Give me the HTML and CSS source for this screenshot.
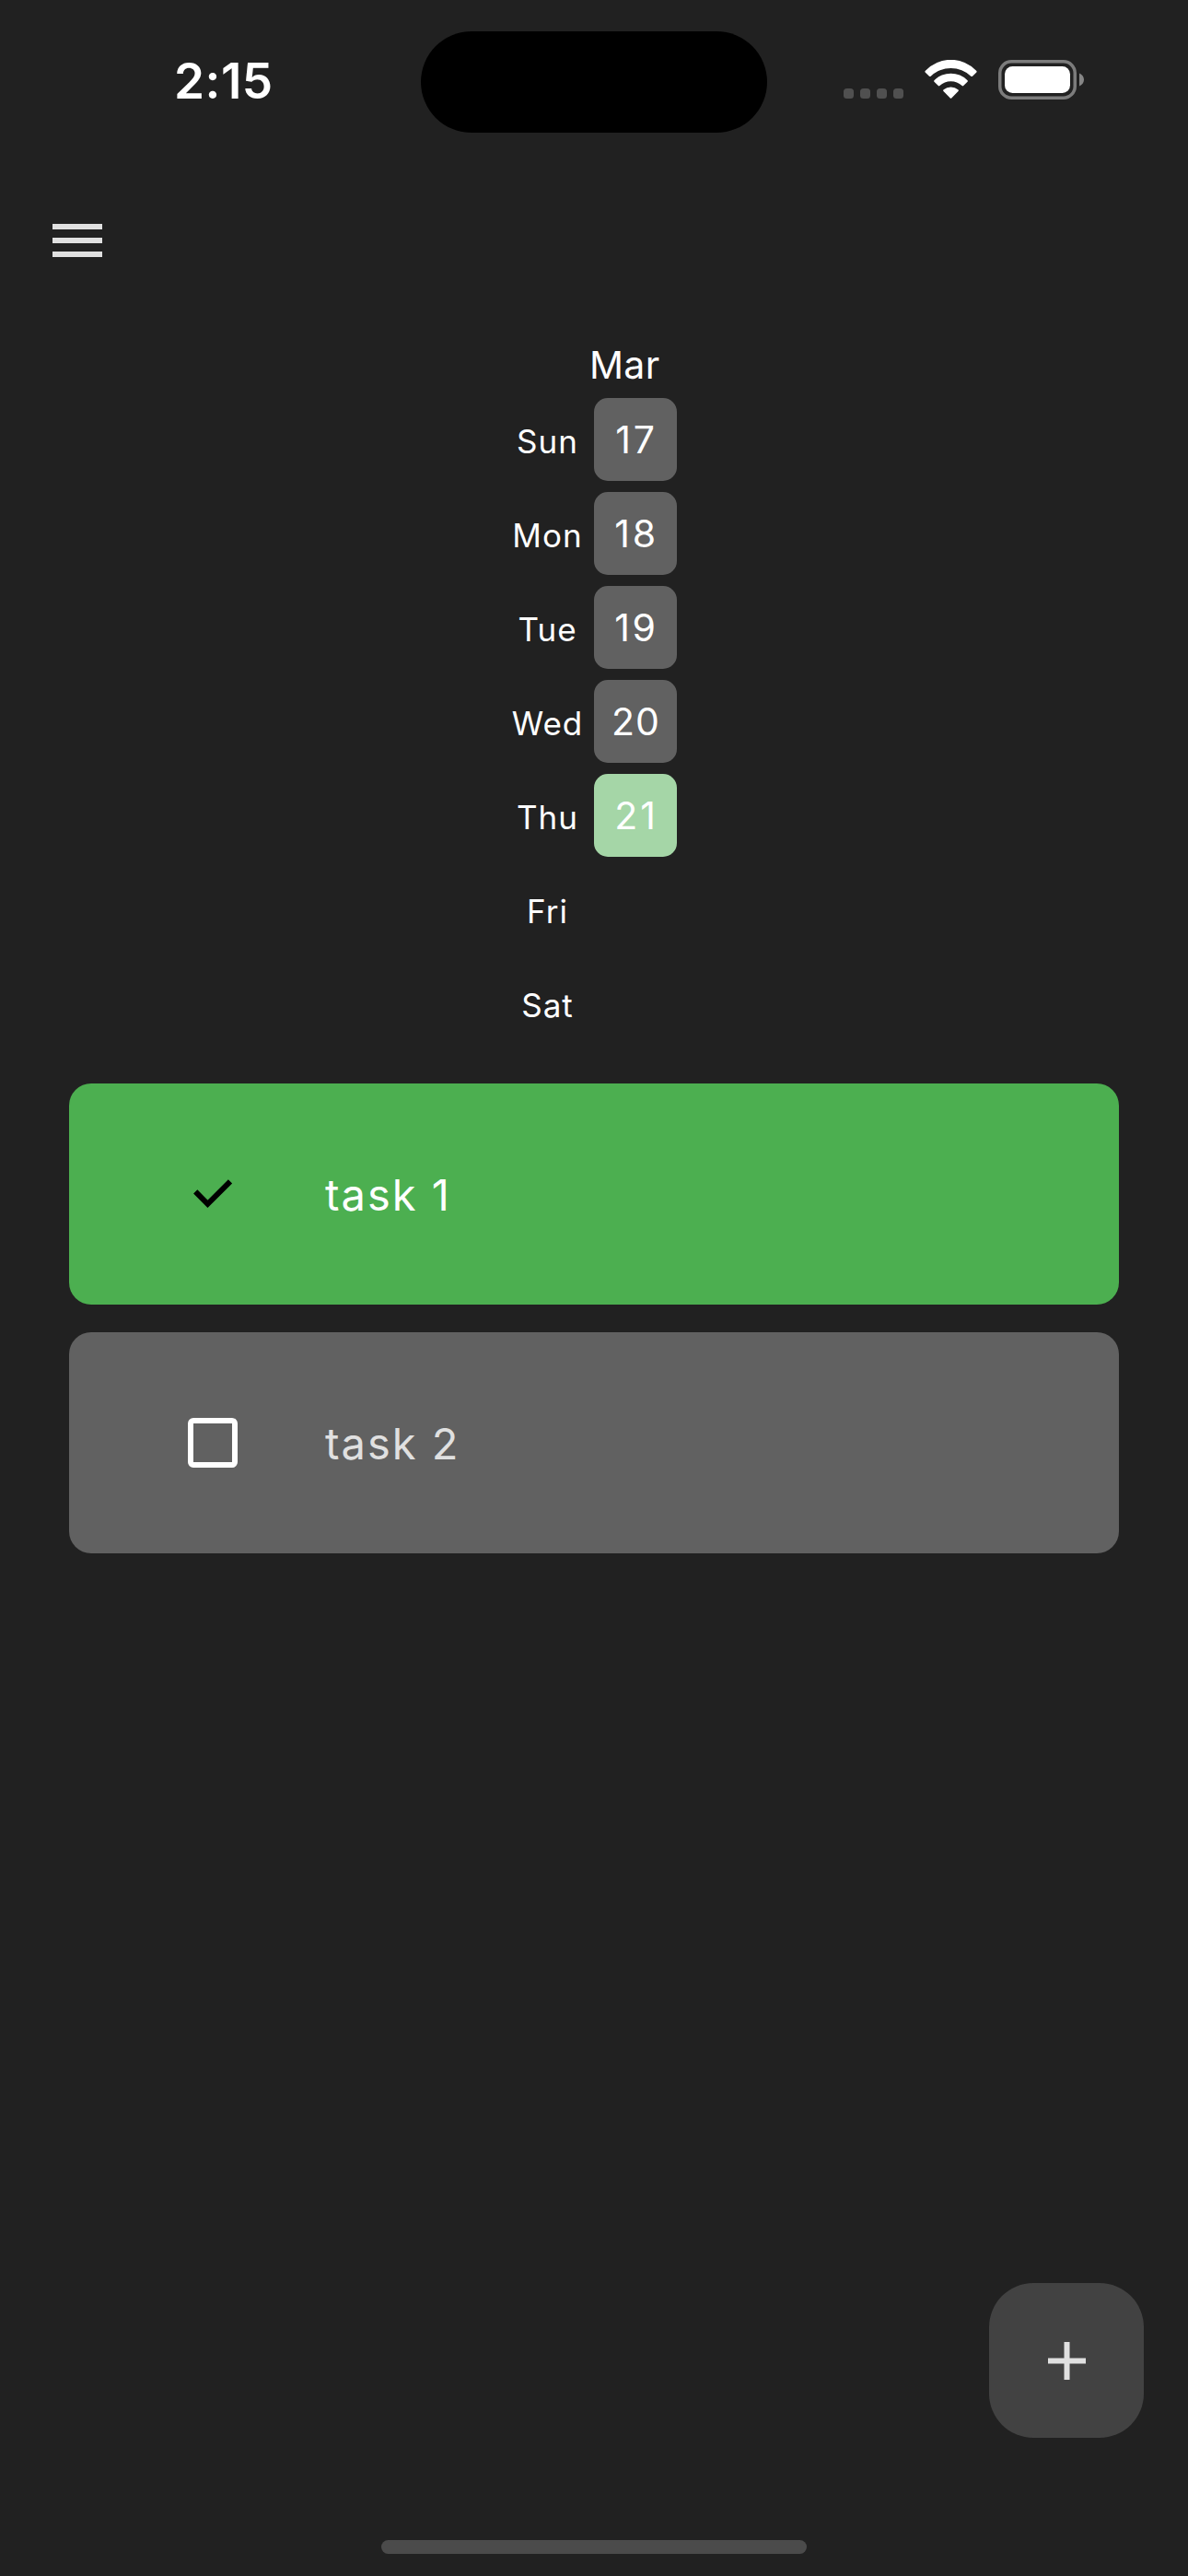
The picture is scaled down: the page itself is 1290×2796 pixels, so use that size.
FILE: index.html
```html
<!DOCTYPE html>
<html lang="en">
<head>
<meta charset="utf-8">
<title>Tasks</title>
<link rel="stylesheet" href="styles.css">
</head>
<body>
<header class="status">
  <div class="clock">2:15</div>
  <div class="island"></div>
  <div class="indicators">
    <div class="signal"><i></i><i></i><i></i><i></i></div>
    <svg class="wifi" viewBox="0 0 57 42" width="57" height="42">
      <path d="M.9 13.7Q-.2 12.6.9 11.7A38 38 0 0 1 56.1 11.7Q57.2 12.6 56.1 13.7L52 17.7Q51.2 18.5 50.3 17.7A31.8 31.8 0 0 0 6.7 17.7Q5.8 18.5 5 17.7Z"/>
      <path d="M10.7 24Q9.5 23 10.7 22A25.4 25.4 0 0 1 46.3 22Q47.5 23 46.3 24L42.2 28Q41.5 28.8 40.6 28A18 18 0 0 0 16.4 28Q15.5 28.8 14.8 28Z"/>
      <path d="M20.7 34.2Q19.5 33.1 20.7 32.3A12.4 12.4 0 0 1 36.3 32.3Q37.5 33.1 36.3 34.2L29.2 41.5Q28.5 42.2 27.8 41.5Z"/>
    </svg>
    <svg class="battery" viewBox="0 0 93 43" width="93" height="43">
      <rect class="shell" x="1.75" y="1.75" width="81.5" height="39.5" rx="12.5"/>
      <rect class="charge" x="7" y="7" width="71" height="29" rx="8.5"/>
      <path class="terminal" d="M88 14.5C91 15.7 93 18.5 93 21.5S91 27.3 88 28.5Z"/>
    </svg>
  </div>
</header>

<nav class="appbar">
  <svg class="menu" viewBox="0 0 54 36" width="54" height="36">
    <path d="M0 0h54v6H0zM0 15h54v6H0zM0 30h54v6H0z"/>
  </svg>
</nav>

<main>
  <section class="calendar">
    <div class="month">Mar</div>
    <div class="day"><span class="name">Sun</span><span class="date">17</span></div>
    <div class="day"><span class="name">Mon</span><span class="date">18</span></div>
    <div class="day"><span class="name">Tue</span><span class="date">19</span></div>
    <div class="day"><span class="name">Wed</span><span class="date tight">20</span></div>
    <div class="day"><span class="name">Thu</span><span class="date today">21</span></div>
    <div class="day"><span class="name">Fri</span></div>
    <div class="day"><span class="name">Sat</span></div>
  </section>

  <section class="tasks">
    <div class="task done">
      <svg class="box" viewBox="0 0 54 54" width="54" height="54">
        <path class="tick" d="M8.2 24.4L21.5 37.8L46 13.4"/>
      </svg>
      <span class="title">task 1</span>
    </div>
    <div class="task">
      <svg class="box" viewBox="0 0 54 54" width="54" height="54">
        <path class="frame" d="M6 0H48A6 6 0 0 1 54 6V48A6 6 0 0 1 48 54H6A6 6 0 0 1 0 48V6A6 6 0 0 1 6 0ZM6 6V48H48V6Z"/>
      </svg>
      <span class="title">task 2</span>
    </div>
  </section>
</main>

<footer class="bottom">
  <button class="add" aria-label="Add task">
    <svg viewBox="0 0 41 41" width="41" height="41">
      <path d="M17.5 0h6v17.5H41v6H23.5V41h-6V23.5H0v-6h17.5z"/>
    </svg>
  </button>
  <div class="home"></div>
</footer>
</body>
</html>
```
FILE: styles.css
```css
* { box-sizing: border-box; }

body {
  margin: 0;
  width: 1290px;
  height: 2796px;
  display: flex;
  flex-direction: column;
  background: #212121;
  color: #fff;
  font-family: "Inter", "Liberation Sans", sans-serif;
  overflow: hidden;
}

/* Status bar */
.status {
  display: grid;
  grid-template-columns: 457px 376px 457px;
  height: 177px;
  padding-top: 34px;
  align-items: start;
}

.clock {
  padding: 24px 0 0 189px;
  font-size: 53px;
  font-weight: 600;
  line-height: 60px;
  letter-spacing: 0.5px;
}

.island {
  height: 110px;
  border-radius: 55px;
  background: #000;
}

.indicators {
  display: flex;
  align-items: flex-start;
  padding: 31px 0 0 83px;
}

.signal {
  display: flex;
  gap: 7px;
  padding-top: 31px;
  margin-right: 23px;
}

.signal i {
  width: 11px;
  height: 11px;
  border-radius: 3.5px;
  background: #505050;
}

.wifi {
  margin-right: 23px;
  fill: #fff;
}

.shell {
  fill: none;
  stroke: #7c7c7c;
  stroke-width: 3.5;
}

.charge { fill: #fff; }
.terminal { fill: #868686; }

/* App bar */
.appbar {
  height: 168px;
  padding: 66px 57px 0;
}

.menu {
  display: block;
  fill: #e0e0e0;
}

/* Week calendar */
.calendar {
  width: 192px;
  height: 831px;
  margin-left: 543px;
  padding-top: 21px;
}

.month {
  height: 60px;
  padding-left: 97px;
  font-size: 41px;
  line-height: 60px;
  letter-spacing: 0.3px;
}

.day {
  display: grid;
  grid-template-columns: 102px 90px;
  height: 102px;
  padding: 6px 0;
}

.name {
  padding: 2px 0 0 1px;
  font-size: 35px;
  line-height: 90px;
  letter-spacing: 1px;
  text-align: center;
}

.date {
  height: 90px;
  padding-left: 2px;
  border-radius: 15px;
  background: #616161;
  font-size: 41px;
  line-height: 90px;
  letter-spacing: 2.8px;
  text-align: center;
}

.date.tight {
  padding-left: 1px;
  letter-spacing: 1px;
}

.date.today { background: #a5d6a7; }

/* Task list */
.tasks {
  display: flex;
  flex-direction: column;
  gap: 30px;
  padding: 0 75px;
}

.task {
  display: flex;
  align-items: center;
  height: 240px;
  padding-left: 129px;
  border-radius: 24px;
  background: #616161;
  color: #e0e0e0;
}

.task.done {
  background: #4caf50;
  color: #fff;
}

.box { margin-right: 95px; }
.frame { fill: #fff; }

.tick {
  fill: none;
  stroke: #000;
  stroke-width: 6;
}

.title {
  padding-top: 2px;
  font-size: 47px;
  line-height: 60px;
  letter-spacing: 2px;
}

/* Floating action button and home indicator */
.bottom {
  margin-top: auto;
  padding-bottom: 24px;
}

.add {
  display: flex;
  align-items: center;
  justify-content: center;
  width: 168px;
  height: 168px;
  margin: 0 48px 111px auto;
  padding: 0;
  border: 0;
  border-radius: 48px;
  background: #424242;
}

.add svg { fill: #e0e0e0; }

.home {
  width: 462px;
  height: 15px;
  margin: 0 auto;
  border-radius: 7.5px;
  background: #4b4b4b;
}
```
